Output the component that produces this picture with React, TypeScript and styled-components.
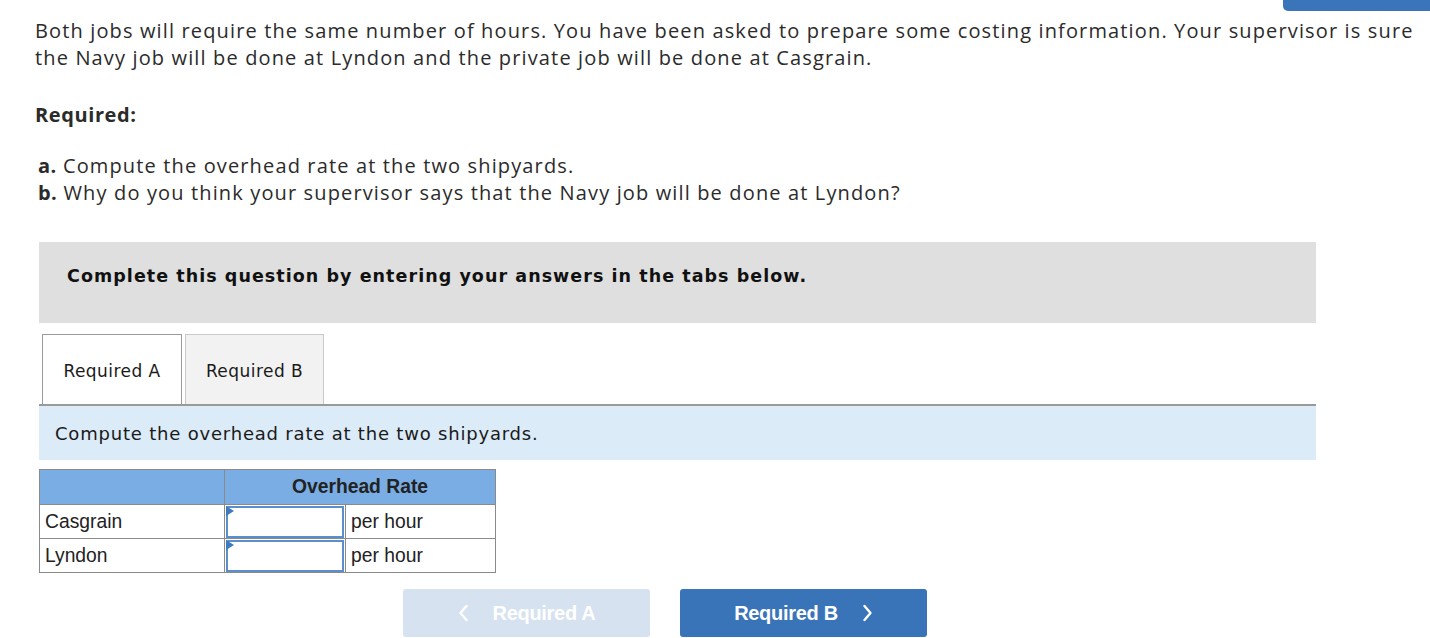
import React from "react";
import styled, { createGlobalStyle } from "styled-components";

const Global = createGlobalStyle`
  html, body { margin: 0; padding: 0; background: #fff; }
  body { font-family: "Open Sans", "Liberation Sans", sans-serif; color: #2b2b2b; }
`;

const Page = styled.div`
  width: 1430px;
  height: 638px;
  overflow: hidden;
  display: flex;
  flex-direction: column;
`;

const TopStrip = styled.div`
  display: flex;
  justify-content: flex-end;
  height: 11px;
`;

const TopButton = styled.div`
  width: 147px;
  height: 11px;
  background: #3a74b9;
  border-radius: 0 0 0 5px;
`;

const Intro = styled.div`
  padding: 6px 0 0 35px;
  font-size: 20px;
  letter-spacing: 1.14px;
  line-height: 27px;
`;

const Para = styled.p`
  margin: 0;
  width: 1390px;
`;

const Heading = styled.p`
  margin: 30px 0 0;
  font-weight: 700;
  letter-spacing: 0.6px;
`;

const List = styled.div`
  margin: 24px 0 0 3px;
`;

const Label = styled.b`
  font-weight: 700;
  letter-spacing: 0.4px;
`;

const Section = styled.div`
  margin: 36px 0 0 39px;
  width: 1277px;
  display: flex;
  flex-direction: column;
`;

const Banner = styled.div`
  height: 81px;
  background: #dfdfdf;
  display: flex;
  align-items: center;
  padding: 0 0 14px 28px;
  box-sizing: border-box;
  font-family: "DejaVu Sans", Verdana, sans-serif;
  font-weight: 700;
  font-size: 17.5px;
  letter-spacing: 1.05px;
  color: #111;
`;

const Tabs = styled.div`
  display: flex;
  gap: 3px;
  margin-top: 11px;
  padding-left: 3px;
  border-bottom: 2px solid #9a9a9a;
`;

const Tab = styled.div<{ $active?: boolean }>`
  width: ${(p) => (p.$active ? 140 : 139)}px;
  height: 70px;
  box-sizing: border-box;
  display: flex;
  align-items: center;
  justify-content: center;
  border: 1px solid ${(p) => (p.$active ? "#9a9a9a" : "#c9c9c9")};
  border-bottom: none;
  background: ${(p) => (p.$active ? "#fff" : "#f2f2f2")};
  font-family: "DejaVu Sans", Verdana, sans-serif;
  font-size: 17px;
  letter-spacing: 0.45px;
  color: #1a1a1a;
  padding-top: 2px;
`;

const Prompt = styled.div`
  height: 54px;
  background: #dbebf8;
  display: flex;
  align-items: center;
  padding-left: 16px;
  font-family: "DejaVu Sans", Verdana, sans-serif;
  font-size: 18px;
  letter-spacing: 0.8px;
  color: #1a1a1a;
`;

const Table = styled.table`
  align-self: flex-start;
  margin-top: 9px;
  border-collapse: collapse;
  font-family: "Liberation Sans", Arial, sans-serif;
  font-size: 19.3px;
  color: #222;
`;

const HeadCell = styled.th<{ $w?: number }>`
  height: 35px;
  padding: 0;
  background: #79ade3;
  border: 1px solid #8a8a8a;
  font-weight: 700;
  font-size: 19.3px;
  text-align: center;
  box-sizing: border-box;
  width: ${(p) => (p.$w ? p.$w + "px" : "auto")};
`;

const Cell = styled.td<{ $w?: number }>`
  height: 34px;
  padding: 0 0 0 5px;
  border: 1px solid #8a8a8a;
  box-sizing: border-box;
  width: ${(p) => (p.$w ? p.$w + "px" : "auto")};
`;

const InputCell = styled.td`
  width: 121px;
  padding: 0;
  border: 1px solid #8a8a8a;
  box-sizing: border-box;
`;

const InputWrap = styled.div`
  position: relative;
  height: 32px;
  margin: 0 1px;
  box-sizing: border-box;
  border: 2px solid #5b8fcb;
  background: #fff;
`;

const Flag = styled.span`
  position: absolute;
  left: -2px;
  top: -2px;
  width: 0;
  height: 0;
  border-top: 5px solid transparent;
  border-bottom: 5px solid transparent;
  border-left: 8px solid #3f7ac0;
`;

const NavRow = styled.div`
  display: flex;
  gap: 30px;
  margin: 16px 0 0 364px;
`;

const NavButton = styled.div<{ $disabled?: boolean }>`
  width: 247px;
  height: 48px;
  border-radius: 3px;
  background: ${(p) => (p.$disabled ? "#d6e2f0" : "#3a74b8")};
  color: #fff;
  display: flex;
  align-items: center;
  justify-content: center;
  gap: 24px;
  font-family: "Liberation Sans", Arial, sans-serif;
  font-weight: 700;
  font-size: 20px;
  letter-spacing: -0.3px;
`;

const Chevron = ({ dir }: { dir: "left" | "right" }) => (
  <svg width="11" height="18" viewBox="0 0 11 18" fill="none">
    <path
      d={dir === "left" ? "M8.5 2 L2.5 9 L8.5 16" : "M2.5 2 L8.5 9 L2.5 16"}
      stroke="#fff"
      strokeWidth="2.4"
      strokeLinecap="round"
      strokeLinejoin="round"
    />
  </svg>
);

const rows = ["Casgrain", "Lyndon"];

export default function App() {
  return (
    <Page>
      <Global />
      <TopStrip>
        <TopButton />
      </TopStrip>
      <Intro>
        <Para>
          Both jobs will require the same number of hours. You have been asked to prepare some costing
          information. Your supervisor is sure the Navy job will be done at Lyndon and the private job
          will be done at Casgrain.
        </Para>
        <Heading>Required:</Heading>
        <List>
          <div>
            <Label>a.</Label> Compute the overhead rate at the two shipyards.
          </div>
          <div>
            <Label>b.</Label> Why do you think your supervisor says that the Navy job will be done at Lyndon?
          </div>
        </List>
      </Intro>
      <Section>
        <Banner>Complete this question by entering your answers in the tabs below.</Banner>
        <Tabs>
          <Tab $active>Required A</Tab>
          <Tab>Required B</Tab>
        </Tabs>
        <Prompt>Compute the overhead rate at the two shipyards.</Prompt>
        <Table>
          <thead>
            <tr>
              <HeadCell $w={185} />
              <HeadCell colSpan={2}>Overhead Rate</HeadCell>
            </tr>
          </thead>
          <tbody>
            {rows.map((r) => (
              <tr key={r}>
                <Cell $w={185}>{r}</Cell>
                <InputCell>
                  <InputWrap>
                    <Flag />
                  </InputWrap>
                </InputCell>
                <Cell $w={150}>per hour</Cell>
              </tr>
            ))}
          </tbody>
        </Table>
        <NavRow>
          <NavButton $disabled>
            <Chevron dir="left" />
            <span>Required A</span>
          </NavButton>
          <NavButton>
            <span>Required B</span>
            <Chevron dir="right" />
          </NavButton>
        </NavRow>
      </Section>
    </Page>
  );
}
